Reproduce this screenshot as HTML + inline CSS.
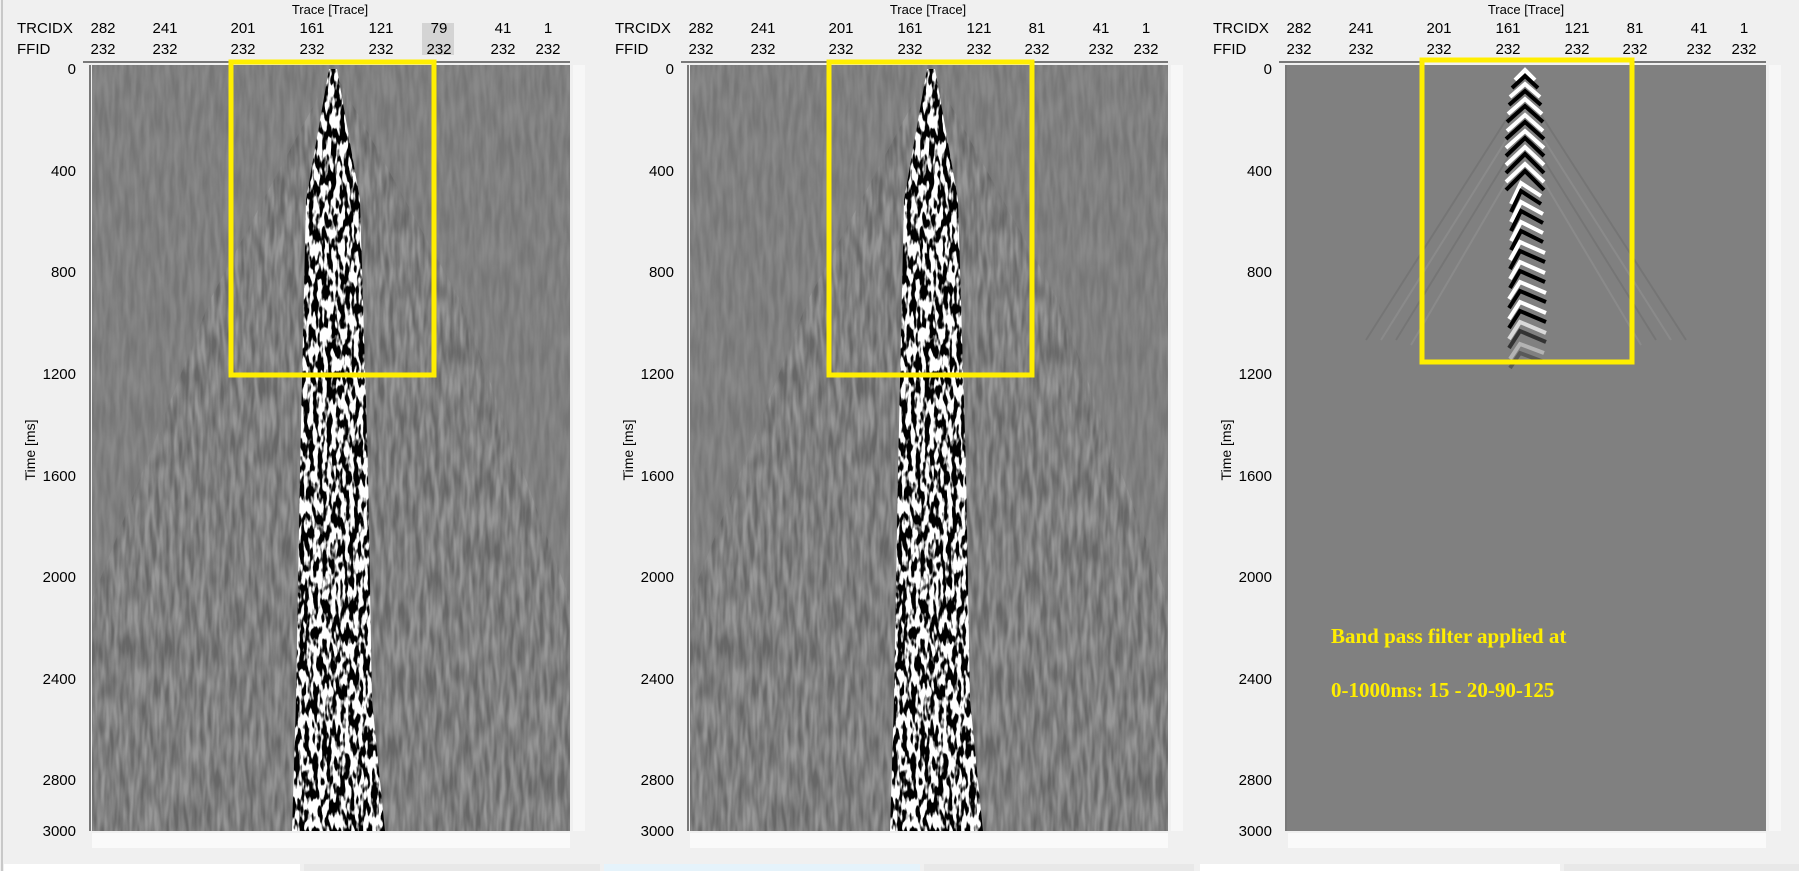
<!DOCTYPE html>
<html><head><meta charset="utf-8"><style>
html,body{margin:0;padding:0;background:#f0f0f0;width:1799px;height:871px;overflow:hidden}
svg{display:block}
text{font-family:"Liberation Sans",sans-serif;fill:#000}
</style></head><body>
<svg width="1799" height="871" viewBox="0 0 1799 871" xmlns="http://www.w3.org/2000/svg">
<defs>
<filter id="hn" x="0" y="0" width="100%" height="100%" color-interpolation-filters="sRGB">
<feTurbulence type="fractalNoise" baseFrequency="0.22 0.07" numOctaves="2" seed="3"/>
<feColorMatrix type="matrix" values="9 0 0 0 -4  9 0 0 0 -4  9 0 0 0 -4  0 0 0 0 1"/>
</filter>
<filter id="ln" x="0" y="0" width="100%" height="100%" color-interpolation-filters="sRGB">
<feTurbulence type="fractalNoise" baseFrequency="0.2 0.03" numOctaves="2" seed="7"/>
<feColorMatrix type="matrix" values="2 0 0 0 -0.5  2 0 0 0 -0.5  2 0 0 0 -0.5  0 0 0 0 1"/>
</filter>
<clipPath id="cone1"><polygon points="329,69 337,69 360,200 368,470 372,700 385,831 292,831 296,700 300,470 306,200"/></clipPath>
<clipPath id="fan1"><polygon points="333,69 460,300 570,600 570,831 92,831 92,600 210,300"/></clipPath>
<g id="seis">
<rect x="92" y="65" width="478" height="766" fill="#808080"/>
<rect x="92" y="65" width="478" height="766" filter="url(#ln)" opacity="0.07"/>
<rect x="92" y="65" width="478" height="766" filter="url(#ln)" clip-path="url(#fan1)" opacity="0.12"/>
<rect x="92" y="65" width="478" height="766" filter="url(#hn)" clip-path="url(#cone1)"/>
</g>
</defs>
<line x1="2" y1="0" x2="2" y2="871" stroke="#a0a0a0"/>

<!-- Panel 1 -->
<g>
<text x="330" y="14" font-size="13" text-anchor="middle">Trace [Trace]</text>
<rect x="422" y="23" width="32" height="32" fill="#d4d4d4"/>
<g font-size="15">
<text x="17" y="33">TRCIDX</text><text x="17" y="54">FFID</text>
<g text-anchor="middle">
<text x="103" y="33">282</text><text x="165" y="33">241</text><text x="243" y="33">201</text><text x="312" y="33">161</text><text x="381" y="33">121</text><text x="439" y="33">79</text><text x="503" y="33">41</text><text x="548" y="33">1</text>
<text x="103" y="54">232</text><text x="165" y="54">232</text><text x="243" y="54">232</text><text x="312" y="54">232</text><text x="381" y="54">232</text><text x="439" y="54">232</text><text x="503" y="54">232</text><text x="548" y="54">232</text>
</g></g>
<line x1="83" y1="62" x2="570" y2="62" stroke="#000"/>
<line x1="90" y1="65" x2="90" y2="831" stroke="#000"/>
<use href="#seis"/>
<rect x="231" y="62" width="203" height="313" fill="none" stroke="#ffee00" stroke-width="5"/>
<rect x="573" y="65" width="12" height="766" fill="#f7f7f7"/>
<rect x="92" y="833" width="478" height="15" fill="#fafafa"/>
</g>

<!-- Panel 2 -->
<g transform="translate(598,0)">
<text x="330" y="14" font-size="13" text-anchor="middle">Trace [Trace]</text>
<g font-size="15">
<text x="17" y="33">TRCIDX</text><text x="17" y="54">FFID</text>
<g text-anchor="middle">
<text x="103" y="33">282</text><text x="165" y="33">241</text><text x="243" y="33">201</text><text x="312" y="33">161</text><text x="381" y="33">121</text><text x="439" y="33">81</text><text x="503" y="33">41</text><text x="548" y="33">1</text>
<text x="103" y="54">232</text><text x="165" y="54">232</text><text x="243" y="54">232</text><text x="312" y="54">232</text><text x="381" y="54">232</text><text x="439" y="54">232</text><text x="503" y="54">232</text><text x="548" y="54">232</text>
</g></g>
<line x1="83" y1="62" x2="570" y2="62" stroke="#000"/>
<line x1="90" y1="65" x2="90" y2="831" stroke="#000"/>
<use href="#seis"/>
<rect x="231" y="62" width="203" height="313" fill="none" stroke="#ffee00" stroke-width="5"/>
<rect x="573" y="65" width="12" height="766" fill="#f7f7f7"/>
<rect x="92" y="833" width="478" height="15" fill="#fafafa"/>
</g>

<!-- Panel 3 -->
<g transform="translate(1196,0)">
<text x="330" y="14" font-size="13" text-anchor="middle">Trace [Trace]</text>
<g font-size="15">
<text x="17" y="33">TRCIDX</text><text x="17" y="54">FFID</text>
<g text-anchor="middle">
<text x="103" y="33">282</text><text x="165" y="33">241</text><text x="243" y="33">201</text><text x="312" y="33">161</text><text x="381" y="33">121</text><text x="439" y="33">81</text><text x="503" y="33">41</text><text x="548" y="33">1</text>
<text x="103" y="54">232</text><text x="165" y="54">232</text><text x="243" y="54">232</text><text x="312" y="54">232</text><text x="381" y="54">232</text><text x="439" y="54">232</text><text x="503" y="54">232</text><text x="548" y="54">232</text>
</g></g>
<line x1="83" y1="62" x2="570" y2="62" stroke="#000"/>
<line x1="90" y1="65" x2="90" y2="831" stroke="#000"/>
<rect x="91" y="65" width="479" height="766" fill="#808080"/>
<g fill="none" stroke-width="2" opacity=".08">
<polyline points="170,340 329,90 490,340" stroke="#000"/>
<polyline points="185,340 329,110 475,340" stroke="#fff"/>
<polyline points="200,340 329,130 460,340" stroke="#000"/>
<polyline points="215,345 329,150 445,345" stroke="#fff"/>
</g>
<g fill="none" stroke-width="4">
<polyline points="319,80 329,70 339,80" stroke="#fff"/>
<polyline points="316,88 329,76 342,88" stroke="#000"/>
<polyline points="314,97 329,84 344,97" stroke="#fff"/>
<polyline points="313,105 329,91 345,105" stroke="#000"/>
<polyline points="312,114 329,99 346,114" stroke="#fff"/>
<polyline points="311,122 329,106 347,122" stroke="#000"/>
<polyline points="311,131 329,115 347,131" stroke="#fff"/>
<polyline points="310,139 329,122 348,139" stroke="#000"/>
<polyline points="310,148 329,131 348,148" stroke="#fff"/>
<polyline points="310,156 329,138 348,156" stroke="#000"/>
<polyline points="310,165 329,147 348,165" stroke="#fff"/>
<polyline points="310,173 329,154 348,173" stroke="#000"/>
<polyline points="310,182 329,164 348,182" stroke="#fff"/>
<polyline points="310,190 329,171 348,190" stroke="#000"/>
<polyline points="315,204 325,183 345,196" stroke="#fff"/>
<polyline points="315,212 325,191 345,204" stroke="#000"/>
<polyline points="315,222 325,202 347,214" stroke="#fff"/>
<polyline points="315,231 325,211 347,223" stroke="#000"/>
<polyline points="315,241 325,222 347,233" stroke="#fff"/>
<polyline points="315,250 325,231 347,242" stroke="#000"/>
<polyline points="314,260 324,242 349,253" stroke="#fff"/>
<polyline points="314,269 324,251 349,262" stroke="#000"/>
<polyline points="314,279 324,262 349,273" stroke="#fff"/>
<polyline points="314,288 324,271 349,282" stroke="#000"/>
<polyline points="313,299 324,282 350,293" stroke="#fff"/>
<polyline points="313,308 324,291 350,302" stroke="#000"/>
<polyline points="313,319 324,302 350,313" stroke="#fff"/>
<polyline points="313,328 324,311 350,322" stroke="#000"/>
<polyline points="313,339 324,322 350,333" stroke="#fff" opacity=".7"/>
<polyline points="313,348 324,331 350,342" stroke="#000" opacity=".6"/>
<polyline points="314,359 324,344 348,353" stroke="#fff" opacity=".4"/>
<polyline points="314,368 324,353 348,362" stroke="#000" opacity=".3"/>
</g>
<rect x="226" y="60" width="210" height="302" fill="none" stroke="#ffee00" stroke-width="5"/>
<text x="135" y="643" font-size="21" font-weight="bold" style="font-family:'Liberation Serif',serif;fill:#ffee00">Band pass filter applied at</text>
<text x="135" y="697" font-size="21" font-weight="bold" style="font-family:'Liberation Serif',serif;fill:#ffee00">0-1000ms: 15 - 20-90-125</text>
<rect x="573" y="65" width="12" height="766" fill="#f7f7f7"/>
<rect x="92" y="833" width="478" height="15" fill="#fafafa"/>
</g>

<!-- Y axes -->
<g font-size="15" text-anchor="end">
<g id="yax">
<text x="76" y="74">0</text><text x="76" y="176">400</text><text x="76" y="277">800</text><text x="76" y="379">1200</text><text x="76" y="481">1600</text><text x="76" y="582">2000</text><text x="76" y="684">2400</text><text x="76" y="785">2800</text><text x="76" y="836">3000</text>
<text transform="translate(35,450) rotate(-90)" text-anchor="middle" font-size="14">Time [ms]</text>
</g>
<use href="#yax" x="598"/>
<use href="#yax" x="1196"/>
</g>

<!-- bottom tabs -->
<rect x="4" y="864" width="296" height="7" fill="#fff"/>
<rect x="304" y="864" width="296" height="7" fill="#e8e8e8"/>
<rect x="604" y="864" width="316" height="7" fill="#e5f3fb"/>
<rect x="924" y="864" width="270" height="7" fill="#e8e8e8"/>
<rect x="1200" y="864" width="360" height="7" fill="#fff"/>
<rect x="1564" y="864" width="235" height="7" fill="#e8e8e8"/>
</svg>
</body></html>
